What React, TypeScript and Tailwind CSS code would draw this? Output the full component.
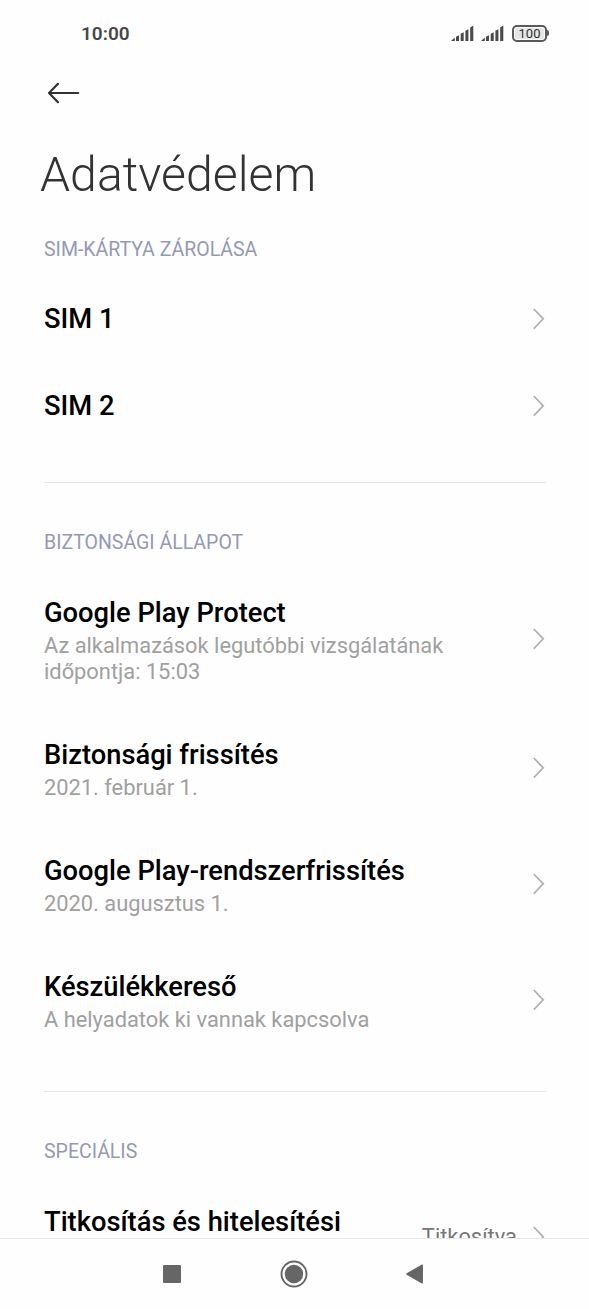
import React from "react";

type SettingItem = {
  title: string;
  description?: string;
  height: string;
};

const simItems: SettingItem[] = [
  { title: "SIM 1", height: "h-[87px]" },
  { title: "SIM 2", height: "h-[87px]" },
];

const securityItems: SettingItem[] = [
  {
    title: "Google Play Protect",
    description: "Az alkalmazások legutóbbi vizsgálatának időpontja: 15:03",
    height: "h-[142px]",
  },
  {
    title: "Biztonsági frissítés",
    description: "2021. február 1.",
    height: "h-[116px]",
  },
  {
    title: "Google Play-rendszerfrissítés",
    description: "2020. augusztus 1.",
    height: "h-[116px]",
  },
  {
    title: "Készülékkereső",
    description: "A helyadatok ki vannak kapcsolva",
    height: "h-[116px]",
  },
];

const Chevron = () => (
  <svg className="w-[14px] h-[22px] shrink-0" viewBox="0 0 14 22" fill="none">
    <path d="M1.8 1L11.2 10.8L1.8 20.6" stroke="#b2b2b2" strokeWidth="1.8" />
  </svg>
);

const Signal = () => (
  <svg className="w-[23px] h-[17px]" viewBox="0 0 23 17" fill="#4a4a4a">
    <path d="M0 16L3.8 12.6V16Z" />
    <path d="M5 11.8L8 10.2V16H5Z" />
    <path d="M9.7 8.8L12.7 7.2V16H9.7Z" />
    <path d="M14.4 5.8L17.4 4.2V16H14.4Z" />
    <path d="M19.2 2.4L22.3 0.4V16H19.2Z" />
  </svg>
);

const StatusBar = () => (
  <div className="h-[66px] pl-[81px] pr-[40px] flex items-center justify-between">
    <span className="pt-[2px] text-[19px] font-semibold text-[#484848]">
      10:00
    </span>
    <div className="flex items-center">
      <Signal />
      <div className="w-[7px]" />
      <Signal />
      <div className="ml-[8px] w-[35px] h-[17px] rounded-[5px] border-2 border-[#5a5a5a] p-px">
        <div className="h-full rounded-[2px] bg-[#e6e6e6] flex items-center justify-center text-[13px] leading-none text-[#333]">
          100
        </div>
      </div>
      <div className="w-[2px] h-[6px] rounded-r bg-[#5a5a5a]" />
    </div>
  </div>
);

const SectionTitle = ({ children }: { children: React.ReactNode }) => (
  <h2 className="h-[52px] pt-[2px] flex items-center text-[19.5px] text-[#9599b5]">
    {children}
  </h2>
);

const Row = ({ item }: { item: SettingItem }) => (
  <div className={`${item.height} flex items-center justify-between`}>
    <div className={item.description ? "w-[440px] pt-[4px]" : "w-[440px] pt-px"}>
      <p className="text-[27.3px] leading-[32px] font-medium text-black">
        {item.title}
      </p>
      {item.description && (
        <p className="mt-[3px] pt-px text-[21.85px] leading-[26px] text-[#a0a0a0]">
          {item.description}
        </p>
      )}
    </div>
    <Chevron />
  </div>
);

const Divider = () => <div className="mt-[33px] mb-[33px] h-px bg-[#e6e6e6]" />;

const NavigationBar = () => (
  <nav className="h-[71px] shrink-0 border-t border-[#e9e9e9] flex items-center pl-[163px]">
    <div className="w-[18px] h-[18px] rounded-[1px] bg-[#666]" />
    <svg className="ml-[99px] w-[28px] h-[28px]" viewBox="0 0 28 28">
      <circle cx="14" cy="14" r="12.5" fill="none" stroke="#666" strokeWidth="1.9" />
      <circle cx="14" cy="14" r="9.2" fill="#666" />
    </svg>
    <svg className="ml-[97px] w-[19px] h-[20px]" viewBox="0 0 19 20">
      <path
        d="M2 10L17.2 1.2V18.8Z"
        fill="#666"
        stroke="#666"
        strokeWidth="1.5"
        strokeLinejoin="round"
      />
    </svg>
  </nav>
);

const App = () => {
  return (
    <div className="w-full h-screen flex flex-col overflow-hidden bg-[#fefefe] font-['Roboto',sans-serif]">
      <div className="flex-1 min-h-0 overflow-hidden">
        <StatusBar />
        <header>
          <div className="h-[54px] pl-[47px] flex items-center">
            <svg className="w-[33px] h-[22px]" viewBox="0 0 33 22" fill="none">
              <path
                d="M31.2 11H2.4M11 1.8L2 11L11 20.2"
                stroke="#333"
                strokeWidth="2.2"
                strokeLinecap="round"
                strokeLinejoin="round"
              />
            </svg>
          </div>
          <h1 className="h-[103px] pl-[40px] pt-[25px] text-[48.2px] leading-[60px] font-light text-[#333]">
            Adatvédelem
          </h1>
        </header>
        <main className="pl-[44px] pr-[43px]">
          <section>
            <SectionTitle>SIM-KÁRTYA ZÁROLÁSA</SectionTitle>
            {simItems.map((item) => (
              <Row key={item.title} item={item} />
            ))}
          </section>
          <Divider />
          <section>
            <SectionTitle>BIZTONSÁGI ÁLLAPOT</SectionTitle>
            {securityItems.map((item) => (
              <Row key={item.title} item={item} />
            ))}
          </section>
          <Divider />
          <section>
            <SectionTitle>SPECIÁLIS</SectionTitle>
            <div className="h-[119px] flex items-center">
              <p className="w-[340px] pt-[2px] text-[27.3px] leading-[32px] font-medium text-black">
                Titkosítás és hitelesítési adatok
              </p>
              <span className="ml-auto mr-[15px] pt-[2px] text-[21.85px] text-[#777]">
                Titkosítva
              </span>
              <Chevron />
            </div>
          </section>
        </main>
      </div>
      <NavigationBar />
    </div>
  );
};

export default App;
